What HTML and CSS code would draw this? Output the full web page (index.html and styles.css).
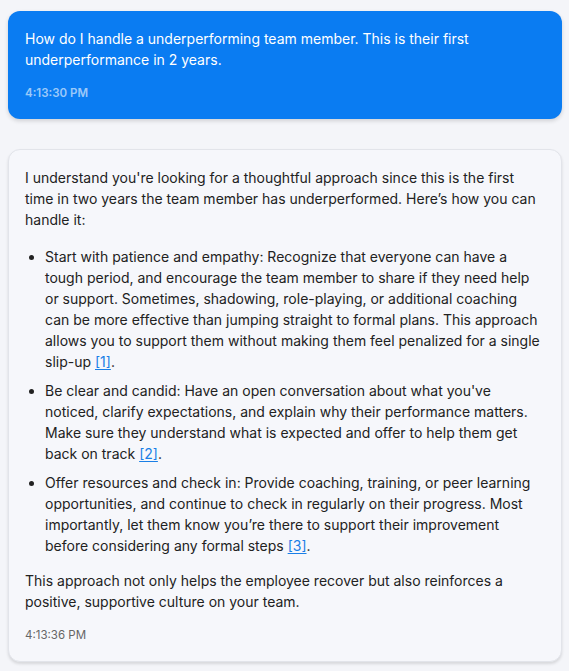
FILE: index.html
```html
<!DOCTYPE html>
<html lang="en">
<head>
    <meta charset="UTF-8">
    <meta name="viewport" content="width=device-width, initial-scale=1.0">
    <title>Chat</title>
    <link rel="stylesheet" href="styles.css">
</head>
<body>
    <div class="chat">
        <div class="message user">
            <p>How do I handle a underperforming team member. This is their first underperformance in 2 years.</p>
            <div class="time">4:13:30 PM</div>
        </div>
        <div class="message bot">
            <p>I understand you're looking for a thoughtful approach since this is the first time in two years the team member has underperformed. Here’s how you can handle it:</p>
            <ul>
                <li>Start with patience and empathy: Recognize that everyone can have a tough period, and encourage the team member to share if they need help or support. Sometimes, shadowing, role-playing, or additional coaching can be more effective than jumping straight to formal plans. This approach allows you to support them without making them feel penalized for a single slip-up <a href="#">[1]</a>.</li>
                <li>Be clear and candid: Have an open conversation about what you've noticed, clarify expectations, and explain why their performance matters. Make sure they understand what is expected and offer to help them get back on track <a href="#">[2]</a>.</li>
                <li>Offer resources and check in: Provide coaching, training, or peer learning opportunities, and continue to check in regularly on their progress. Most importantly, let them know you’re there to support their improvement before considering any formal steps <a href="#">[3]</a>.</li>
            </ul>
            <p>This approach not only helps the employee recover but also reinforces a positive, supportive culture on your team.</p>
            <div class="time">4:13:36 PM</div>
        </div>
    </div>
</body>
</html>
```
FILE: styles.css
```css
body {
    margin: 0;
    background-color: #f4f5f9;
    font-family: Inter, "Noto Sans", sans-serif;
    font-size: 14px;
    line-height: 21px;
    color: #222;
}
.chat {
    display: flex;
    flex-direction: column;
    gap: 30px;
    padding: 11px 7px 10px 8px;
}
.message {
    border-radius: 12px;
}
.message p {
    margin: 0;
}
.user {
    background-color: #0a7cf2;
    color: #fff;
    box-shadow: 0px 2px 4px rgba(0, 0, 0, 0.15);
    padding: 17px 17px 19px;
}
.user .time {
    color: rgba(255, 255, 255, 0.6);
    font-weight: 600;
}
.bot {
    background-color: #f6f7fb;
    border: 1px solid #e2e4ea;
    box-shadow: 0px 2px 3px rgba(0, 0, 0, 0.12);
    padding: 17px 16px 19px;
}
.bot ul {
    margin: 16px 0 14px;
    padding-left: 20px;
}
.bot li {
    margin-bottom: 8px;
}
.bot li:last-child {
    margin-bottom: 0;
}
.bot a {
    color: #1a7fe6;
    text-underline-offset: 2px;
}
.time {
    font-size: 11.5px;
    line-height: 14px;
    margin-top: 16px;
    color: #666;
}
```
